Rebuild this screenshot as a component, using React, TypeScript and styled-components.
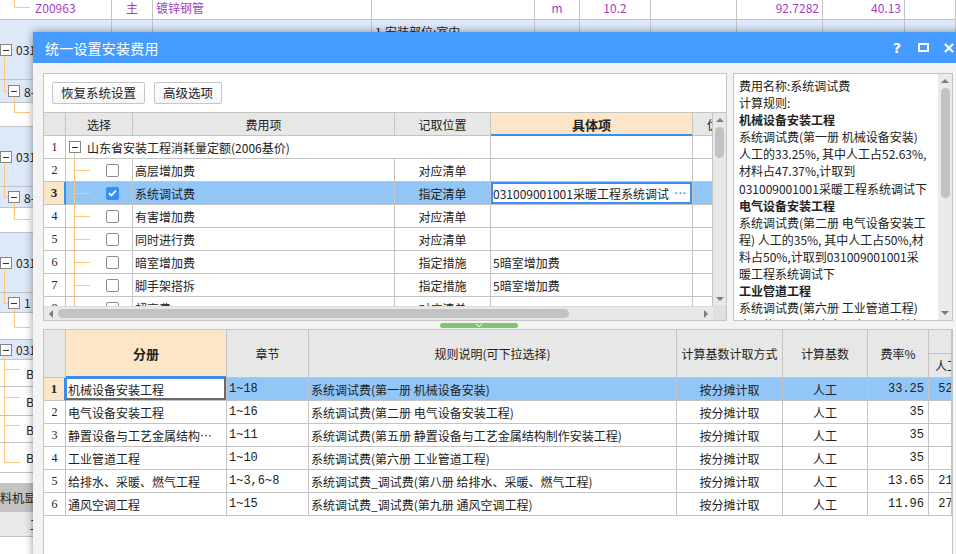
import React from 'react';
import styled, { createGlobalStyle } from 'styled-components';

const FONT = '"Noto Sans CJK SC", "Noto Sans", sans-serif';
const LINE = '#c4c4c4';
const HEAD = '#e7e7e7';
const PEACH = '#fde5c7';
const SEL = '#92c6f6';
const BLUE = '#3a8ef0';
const TREE = '#ffc676';

const GlobalStyle = createGlobalStyle`
  html, body { margin: 0; padding: 0; background: #fff; }
  body { font-family: ${FONT}; font-size: 12px; color: #222; overflow: hidden; }
  * { box-sizing: border-box; }
`;

const Screen = styled.div`
  position: relative;
  width: 956px;
  height: 554px;
  overflow: hidden;
  background: #fff;
`;

/* ---------- application behind the dialog ---------- */

const BgTable = styled.div`
  display: flex;
  flex-direction: column;
  margin-top: -4px;
`;

const BgRow = styled.div<{ $h: number; $blue?: boolean }>`
  display: grid;
  grid-template-columns: 112px 41px 219px 163px 45px 71px 86px 86px 82px 1fr;
  height: ${p => p.$h}px;
  flex: none;
  background: ${p => (p.$blue ? '#dde8f8' : '#fff')};
  border-bottom: 1px solid ${LINE};
`;

const BgCell = styled.div<{ $align?: 'left' | 'center' | 'right'; $top?: boolean }>`
  position: relative;
  border-right: 1px solid ${LINE};
  display: flex;
  align-items: ${p => (p.$top ? 'flex-start' : 'center')};
  justify-content: ${p => (p.$align === 'right' ? 'flex-end' : p.$align === 'center' ? 'center' : 'flex-start')};
  padding: ${p => (p.$top ? '4px 3px 0' : '0 3px')};
  color: #a23ec4;
  white-space: nowrap;
  overflow: hidden;
  line-height: 15px;
`;

const TreeCell = styled.div<{ $indent: number }>`
  position: relative;
  border-right: 1px solid ${LINE};
  display: flex;
  align-items: center;
  gap: 4px;
  padding-left: ${p => p.$indent}px;
  white-space: nowrap;
  overflow: hidden;
  color: #222;
`;

const Purple = styled.span`
  color: #a23ec4;
`;

const Plain = styled.span`
  color: #222;
`;

const TabBar = styled.div`
  height: 29px;
  margin-top: 10px;
  background: #c3c3c3;
  display: flex;
  align-items: center;
  font-size: 12px;
  color: #222;
`;

const TabLabel = styled.span`
  width: 36px;
  overflow: hidden;
  white-space: nowrap;
  text-indent: -12px;
`;

const TabHead = styled.div`
  height: 25px;
  background: #e9e9e9;
  border-bottom: 1px solid ${LINE};
  display: flex;
  align-items: center;
  padding-left: 30px;
`;

const LinesSvg = styled.svg`
  position: absolute;
  left: 0;
  top: 0;
  overflow: visible;
  pointer-events: none;
`;

const Branches = ({ lines }: { lines: number[][] }) => (
  <LinesSvg width="1" height="1">
    {lines.map((l, i) => (
      <line key={i} x1={l[0]} y1={l[1]} x2={l[2]} y2={l[3]} stroke={TREE} strokeWidth="1" />
    ))}
  </LinesSvg>
);

const Fold = styled.span`
  position: relative;
  flex: none;
  width: 12px;
  height: 12px;
  border: 1px solid #858585;
  background: #fff;
  &::after {
    content: '';
    position: absolute;
    left: 2px;
    right: 2px;
    top: 5px;
    height: 1px;
    background: #333;
  }
`;

type BgItem = { h: number; blue?: boolean; indent: number; fold?: boolean; label?: string; lines: number[][] };

const bgItems: BgItem[] = [
  { h: 60, blue: true, indent: 0, fold: true, label: '031', lines: [[4.5, 37, 4.5, 60]] },
  { h: 23, blue: true, indent: 8, fold: true, label: '8-', lines: [[4.5, 0, 4.5, 11.5], [4.5, 11.5, 8, 11.5], [14.5, 18, 14.5, 23]] },
  { h: 24, indent: 35, lines: [[14.5, 0, 14.5, 9.5], [14.5, 9.5, 30, 9.5]] },
  { h: 60, blue: true, indent: 0, fold: true, label: '031', lines: [[4.5, 37, 4.5, 60]] },
  { h: 21, blue: true, indent: 8, fold: true, label: '8-', lines: [[4.5, 0, 4.5, 10.5], [4.5, 10.5, 8, 10.5], [14.5, 17, 14.5, 21]] },
  { h: 25, indent: 35, lines: [[14.5, 0, 14.5, 11.5], [14.5, 11.5, 30, 11.5]] },
  { h: 60, blue: true, indent: 0, fold: true, label: '031', lines: [[4.5, 37, 4.5, 60]] },
  { h: 20, blue: true, indent: 8, fold: true, label: '1', lines: [[4.5, 0, 4.5, 10.5], [4.5, 10.5, 8, 10.5], [14.5, 17, 14.5, 20]] },
  { h: 27, indent: 35, lines: [[14.5, 0, 14.5, 14.5], [14.5, 14.5, 30, 14.5]] },
  { h: 20, blue: true, indent: 0, fold: true, label: '031', lines: [[4.5, 17, 4.5, 20]] },
  { h: 27, indent: 26, label: 'B1', lines: [[4.5, 0, 4.5, 27], [4.5, 9.5, 20, 9.5]] },
  { h: 29, indent: 26, label: 'B1', lines: [[4.5, 0, 4.5, 29], [4.5, 10.5, 20, 10.5]] },
  { h: 27, indent: 26, label: 'B1', lines: [[4.5, 0, 4.5, 27], [4.5, 9.5, 20, 9.5]] },
  { h: 30, indent: 26, label: 'B1', lines: [[4.5, 0, 4.5, 19.5], [4.5, 19.5, 20, 19.5]] },
];

const Backdrop = () => (
  <BgTable>
    <BgRow $h={24}>
      <TreeCell $indent={35}>
        <Branches lines={[[14.5, 0, 14.5, 11.5], [14.5, 11.5, 30, 11.5]]} />
        <Purple>Z00963</Purple>
      </TreeCell>
      <BgCell $align="center">主</BgCell>
      <BgCell>镀锌钢管</BgCell>
      <BgCell />
      <BgCell $align="center">m</BgCell>
      <BgCell $align="center">10.2</BgCell>
      <BgCell />
      <BgCell $align="right">92.7282</BgCell>
      <BgCell $align="right">40.13</BgCell>
      <BgCell />
    </BgRow>
    {bgItems.map((r, i) => (
      <BgRow key={i} $h={r.h} $blue={r.blue}>
        <TreeCell $indent={r.indent}>
          <Branches lines={r.lines} />
          {r.fold && <Fold />}
          {r.label}
        </TreeCell>
        <BgCell />
        <BgCell />
        <BgCell $top>{i === 0 && <Plain>1.安装部位:室内</Plain>}</BgCell>
        <BgCell />
        <BgCell />
        <BgCell />
        <BgCell />
        <BgCell />
        <BgCell />
      </BgRow>
    ))}
    <TabBar>
      <TabLabel>工料机显示</TabLabel>
    </TabBar>
    <TabHead>工</TabHead>
  </BgTable>
);

/* ---------- dialog ---------- */

const Dialog = styled.div`
  position: absolute;
  left: 33px;
  top: 32px;
  width: 930px;
  height: 530px;
  background: #f3f3f3;
  box-shadow: 0 0 8px rgba(0, 0, 0, 0.42);
  display: flex;
  flex-direction: column;
`;

const TitleBar = styled.div`
  flex: none;
  height: 31px;
  background: #459bff;
  color: #fff;
  display: flex;
  align-items: center;
  padding: 0 1px 0 12px;
`;

const Title = styled.span`
  flex: 1;
  font-size: 14px;
  letter-spacing: 0.2px;
`;

const WinButton = styled.span`
  width: 26px;
  height: 31px;
  display: flex;
  align-items: center;
  justify-content: center;
  font-family: "DejaVu Sans", sans-serif;
  font-weight: 700;
  font-size: 14px;
  color: #fff;
`;

const Body = styled.div`
  flex: 1;
  display: flex;
  flex-direction: column;
  padding: 10px 10px 0 10px;
  min-height: 0;
`;

const TopRow = styled.div`
  flex: none;
  height: 248px;
  display: flex;
  gap: 6px;
`;

const Panel = styled.div`
  width: 684px;
  background: #fff;
  border: 1px solid ${LINE};
  display: flex;
  flex-direction: column;
`;

const Toolbar = styled.div`
  flex: none;
  height: 39px;
  border-bottom: 1px solid ${LINE};
  display: flex;
  align-items: flex-start;
  gap: 9px;
  padding: 8px 0 0 8px;
`;

const Button = styled.button`
  height: 22px;
  padding: 0 8px;
  border: 1px solid #c6c6c6;
  border-radius: 2px;
  background: linear-gradient(#ffffff, #f6f6f6);
  font-family: ${FONT};
  font-size: 12.5px;
  color: #222;
  line-height: 20px;
`;

const GridMain = styled.div`
  flex: none;
  height: 193px;
  display: flex;
`;

const Viewport = styled.div`
  flex: 1;
  overflow: hidden;
`;

const UGrid = styled.div`
  display: grid;
  grid-template-columns: 22px 67px 262px 96px 202px 20px;
  grid-auto-rows: 23px;
`;

const HeadCell = styled.div<{ $active?: boolean; $rows?: number; $align?: 'left' | 'center'; $indent?: number }>`
  grid-row: span ${p => p.$rows ?? 1};
  background: ${p => (p.$active ? PEACH : HEAD)};
  border-right: 1px solid ${LINE};
  border-bottom: 1px solid ${p => (p.$active ? BLUE : LINE)};
  box-shadow: ${p => (p.$active ? `inset 0 -1px 0 ${BLUE}` : 'none')};
  display: flex;
  align-items: center;
  justify-content: ${p => (p.$align === 'left' ? 'flex-start' : 'center')};
  padding-left: ${p => (p.$align === 'left' ? p.$indent ?? 8 : 0)}px;
  font-weight: ${p => (p.$active ? 700 : 400)};
  font-size: ${p => (p.$active ? '13px' : '12px')};
  white-space: nowrap;
  overflow: hidden;
  color: #222;
`;

const Cell = styled.div<{ $align?: 'left' | 'center' | 'right'; $sel?: boolean; $span?: number }>`
  position: relative;
  grid-column: span ${p => p.$span ?? 1};
  background: ${p => (p.$sel ? SEL : '#fff')};
  border-right: 1px solid ${LINE};
  border-bottom: 1px solid ${LINE};
  display: flex;
  align-items: center;
  justify-content: ${p => (p.$align === 'right' ? 'flex-end' : p.$align === 'center' ? 'center' : 'flex-start')};
  padding: ${p => (p.$align === 'right' ? '0 4px 0 0' : p.$align === 'center' ? '0' : '0 0 0 2px')};
  white-space: nowrap;
  overflow: hidden;
  font-size: 12px;
  color: #222;
`;

const NumCell = styled(Cell)<{ $current?: boolean }>`
  justify-content: center;
  padding: 0;
  background: ${p => (p.$current ? PEACH : '#fff')};
  border-right: ${p => (p.$current ? `2px solid ${BLUE}` : `1px solid ${LINE}`)};
  font-weight: ${p => (p.$current ? 700 : 400)};
  font-size: ${p => (p.$current ? '13px' : '12px')};
  font-family: "Liberation Serif", ${FONT};
`;

const SelectCell = styled(Cell)`
  padding-left: 40px;
`;

const GroupCell = styled(Cell)`
  padding-left: 3px;
  gap: 6px;
`;

const EditCell = styled(Cell)`
  background: #fff;
  box-shadow: inset 0 0 0 2px ${BLUE};
  justify-content: space-between;
  padding: 0 5px 0 2px;
`;

const Dots = styled.span`
  color: ${BLUE};
  font-weight: 700;
  letter-spacing: 0.5px;
  font-family: "Liberation Sans", sans-serif;
  font-size: 11px;
`;

const Box = styled.span<{ $on?: boolean }>`
  flex: none;
  width: 13px;
  height: 13px;
  border-radius: 2px;
  border: 1px solid ${p => (p.$on ? BLUE : '#8c8c8c')};
  background: ${p => (p.$on ? BLUE : '#fff')};
  display: inline-flex;
  align-items: center;
  justify-content: center;
`;

const VScroll = styled.div`
  flex: none;
  width: 13px;
  background: #e8e8e8;
  display: flex;
  flex-direction: column;
  align-items: center;
`;

const Thumb = styled.div<{ $len: number; $vertical?: boolean }>`
  flex: none;
  ${p => (p.$vertical ? `width: 9px; height: ${p.$len}px;` : `height: 9px; width: ${p.$len}px;`)}
  border-radius: 5px;
  background: #c2c2c2;
`;

const Spacer = styled.div`
  flex: 1;
`;

const HScroll = styled.div`
  flex: none;
  height: 14px;
  display: flex;
  align-items: center;
  background: #e8e8e8;
  border-top: 1px solid #dcdcdc;
`;

const HTrack = styled.div`
  flex: 1;
  display: flex;
  align-items: center;
  padding: 0 4px;
  gap: 4px;
`;

const Corner = styled.div`
  width: 13px;
  height: 100%;
  background: #e0e0e0;
`;

const Arrow = ({ dir }: { dir: 'up' | 'down' | 'left' | 'right' }) => {
  const pts = {
    up: '0,5 4,1 8,5',
    down: '0,1 4,5 8,1',
    left: '5,0 1,4 5,8',
    right: '1,0 5,4 1,8',
  }[dir];
  const v = dir === 'up' || dir === 'down';
  return (
    <svg width={v ? 8 : 6} height={v ? 6 : 8} style={{ flex: 'none', margin: v ? '4px 0' : 0 }}>
      <polygon points={pts} fill="#7d7d7d" />
    </svg>
  );
};

const InfoPanel = styled.div`
  flex: 1;
  background: #fff;
  border: 1px solid ${LINE};
  display: flex;
  overflow: hidden;
`;

const InfoText = styled.div`
  flex: 1;
  padding: 3px 0 0 5px;
  font-size: 12px;
  line-height: 17.1px;
  color: #222;
  white-space: nowrap;
  overflow: hidden;
`;

const InfoLine = styled.div<{ $bold?: boolean }>`
  font-weight: ${p => (p.$bold ? 700 : 400)};
`;

const InfoScroll = styled(VScroll)`
  width: 14px;
  background: #eaeaea;
`;

const Splitter = styled.div`
  flex: none;
  height: 8px;
  padding: 2px 0 0 397px;
`;

const Grip = styled.div`
  width: 78px;
  height: 5px;
  border-radius: 3px;
  background: #80c46e;
  display: flex;
  justify-content: center;
`;

const Lower = styled.div`
  flex: 1;
  background: #fff;
  border: 1px solid ${LINE};
  border-bottom: none;
  overflow: hidden;
`;

const LGrid = styled.div`
  display: grid;
  grid-template-columns: 22px 161px 82px 368px 106px 85px 61px 1fr;
  grid-template-rows: 24px 24px;
  grid-auto-rows: 23px;
`;

const FocusCell = styled(Cell)`
  background: #fff;
  box-shadow: inset -2px -2px 0 #6a6a6a, inset 1px 1px 0 ${BLUE};
`;

const Mono = styled.span`
  font-family: "Liberation Mono", ${FONT};
  font-size: 12px;
`;

const feeRows = [
  { no: 2, name: '高层增加费', pos: '对应清单', item: '' },
  { no: 3, name: '系统调试费', pos: '指定清单', item: '031009001001采暖工程系统调试', checked: true },
  { no: 4, name: '有害增加费', pos: '对应清单', item: '' },
  { no: 5, name: '同时进行费', pos: '对应清单', item: '' },
  { no: 6, name: '暗室增加费', pos: '指定措施', item: '5暗室增加费' },
  { no: 7, name: '脚手架搭拆', pos: '指定措施', item: '5暗室增加费' },
  { no: 8, name: '超高费', pos: '对应清单', item: '' },
];

const rules = [
  { no: 1, book: '机械设备安装工程', ch: '1~18', rule: '系统调试费(第一册 机械设备安装)', rate: '33.25', labor: '52.63' },
  { no: 2, book: '电气设备安装工程', ch: '1~16', rule: '系统调试费(第二册 电气设备安装工程)', rate: '35', labor: '' },
  { no: 3, book: '静置设备与工艺金属结构…', ch: '1~11', rule: '系统调试费(第五册 静置设备与工艺金属结构制作安装工程)', rate: '35', labor: '' },
  { no: 4, book: '工业管道工程', ch: '1~10', rule: '系统调试费(第六册 工业管道工程)', rate: '35', labor: '' },
  { no: 5, book: '给排水、采暖、燃气工程', ch: '1~3,6~8', rule: '系统调试费_调试费(第八册 给排水、采暖、燃气工程)', rate: '13.65', labor: '21.05' },
  { no: 6, book: '通风空调工程', ch: '1~15', rule: '系统调试费_调试费(第九册 通风空调工程)', rate: '11.96', labor: '27.08' },
];

const info: [string, boolean?][] = [
  ['费用名称:系统调试费'],
  ['计算规则:'],
  ['机械设备安装工程', true],
  ['系统调试费(第一册 机械设备安装)'],
  ['人工的33.25%, 其中人工占52.63%,'],
  ['材料占47.37%,计取到'],
  ['031009001001采暖工程系统调试下'],
  ['电气设备安装工程', true],
  ['系统调试费(第二册 电气设备安装工'],
  ['程) 人工的35%, 其中人工占50%,材'],
  ['料占50%,计取到031009001001采'],
  ['暖工程系统调试下'],
  ['工业管道工程', true],
  ['系统调试费(第六册 工业管道工程)'],
  ['人工的35%, 其中人工占50%,材料'],
];

const CheckMark = () => (
  <svg width="9" height="8" viewBox="0 0 9 8">
    <path d="M1 4.2 L3.4 6.5 L8 1.5" stroke="#fff" strokeWidth="1.8" fill="none" />
  </svg>
);

const UpperGrid = () => (
  <UGrid>
    <HeadCell />
    <HeadCell>选择</HeadCell>
    <HeadCell>费用项</HeadCell>
    <HeadCell>记取位置</HeadCell>
    <HeadCell $active>具体项</HeadCell>
    <HeadCell $align="left" $indent={14}>
      优先
    </HeadCell>

    <NumCell>1</NumCell>
    <GroupCell $span={3}>
      <Branches lines={[[8.5, 17, 8.5, 23]]} />
      <Fold />
      山东省安装工程消耗量定额(2006基价)
    </GroupCell>
    <Cell />
    <Cell />

    {feeRows.map(r => {
      const sel = !!r.checked;
      return (
        <React.Fragment key={r.no}>
          <NumCell $current={sel}>{r.no}</NumCell>
          <SelectCell $sel={sel}>
            <Branches lines={[[8.5, 0, 8.5, 23], [8.5, 11.5, 24, 11.5]]} />
            <Box $on={sel}>{sel && <CheckMark />}</Box>
          </SelectCell>
          <Cell $sel={sel}>{r.name}</Cell>
          <Cell $sel={sel} $align="center">
            {r.pos}
          </Cell>
          {sel ? (
            <EditCell>
              <span>{r.item}</span>
              <Dots>···</Dots>
            </EditCell>
          ) : (
            <Cell $sel={sel}>{r.item}</Cell>
          )}
          <Cell $sel={sel} />
        </React.Fragment>
      );
    })}
  </UGrid>
);

const LowerGrid = () => (
  <LGrid>
    <HeadCell $rows={2} />
    <HeadCell $rows={2} $active>
      分册
    </HeadCell>
    <HeadCell $rows={2}>章节</HeadCell>
    <HeadCell $rows={2}>规则说明(可下拉选择)</HeadCell>
    <HeadCell $rows={2}>计算基数计取方式</HeadCell>
    <HeadCell $rows={2}>计算基数</HeadCell>
    <HeadCell $rows={2}>费率%</HeadCell>
    <HeadCell />
    <HeadCell $align="left" $indent={6}>
      人工费
    </HeadCell>

    {rules.map(r => {
      const sel = r.no === 1;
      return (
        <React.Fragment key={r.no}>
          <NumCell $current={sel}>{r.no}</NumCell>
          {sel ? <FocusCell>{r.book}</FocusCell> : <Cell>{r.book}</Cell>}
          <Cell $sel={sel}>
            <Mono>{r.ch}</Mono>
          </Cell>
          <Cell $sel={sel}>{r.rule}</Cell>
          <Cell $sel={sel} $align="center">
            按分摊计取
          </Cell>
          <Cell $sel={sel} $align="center">
            人工
          </Cell>
          <Cell $sel={sel} $align="right">
            <Mono>{r.rate}</Mono>
          </Cell>
          <Cell $sel={sel}>
            <Mono>&nbsp;{r.labor}</Mono>
          </Cell>
        </React.Fragment>
      );
    })}
  </LGrid>
);

export default function App() {
  return (
    <Screen>
      <GlobalStyle />
      <Backdrop />
      <Dialog>
        <TitleBar>
          <Title>统一设置安装费用</Title>
          <WinButton>?</WinButton>
          <WinButton>
            <svg width="11" height="9" viewBox="0 0 11 9">
              <rect x="1" y="1" width="9" height="7" fill="none" stroke="#fff" strokeWidth="2" />
            </svg>
          </WinButton>
          <WinButton>
            <svg width="10" height="10" viewBox="0 0 10 10">
              <path d="M1 1 L9 9 M9 1 L1 9" stroke="#fff" strokeWidth="2.2" />
            </svg>
          </WinButton>
        </TitleBar>
        <Body>
          <TopRow>
            <Panel>
              <Toolbar>
                <Button>恢复系统设置</Button>
                <Button>高级选项</Button>
              </Toolbar>
              <GridMain>
                <Viewport>
                  <UpperGrid />
                </Viewport>
                <VScroll>
                  <Arrow dir="up" />
                  <Thumb $vertical $len={31} />
                  <Spacer />
                  <Arrow dir="down" />
                </VScroll>
              </GridMain>
              <HScroll>
                <HTrack>
                  <Arrow dir="left" />
                  <Thumb $len={511} />
                  <Spacer />
                  <Arrow dir="right" />
                </HTrack>
                <Corner />
              </HScroll>
            </Panel>
            <InfoPanel>
              <InfoText>
                {info.map(([t, b], i) => (
                  <InfoLine key={i} $bold={b}>
                    {t}
                  </InfoLine>
                ))}
              </InfoText>
              <InfoScroll>
                <Arrow dir="up" />
                <Thumb $vertical $len={110} />
                <Spacer />
                <Arrow dir="down" />
              </InfoScroll>
            </InfoPanel>
          </TopRow>
          <Splitter>
            <Grip>
              <svg width="8" height="5" viewBox="0 0 8 5">
                <path d="M1 0.5 L4 4 L7 0.5" stroke="#fff" strokeWidth="1" fill="none" />
              </svg>
            </Grip>
          </Splitter>
          <Lower>
            <LowerGrid />
          </Lower>
        </Body>
      </Dialog>
    </Screen>
  );
}
